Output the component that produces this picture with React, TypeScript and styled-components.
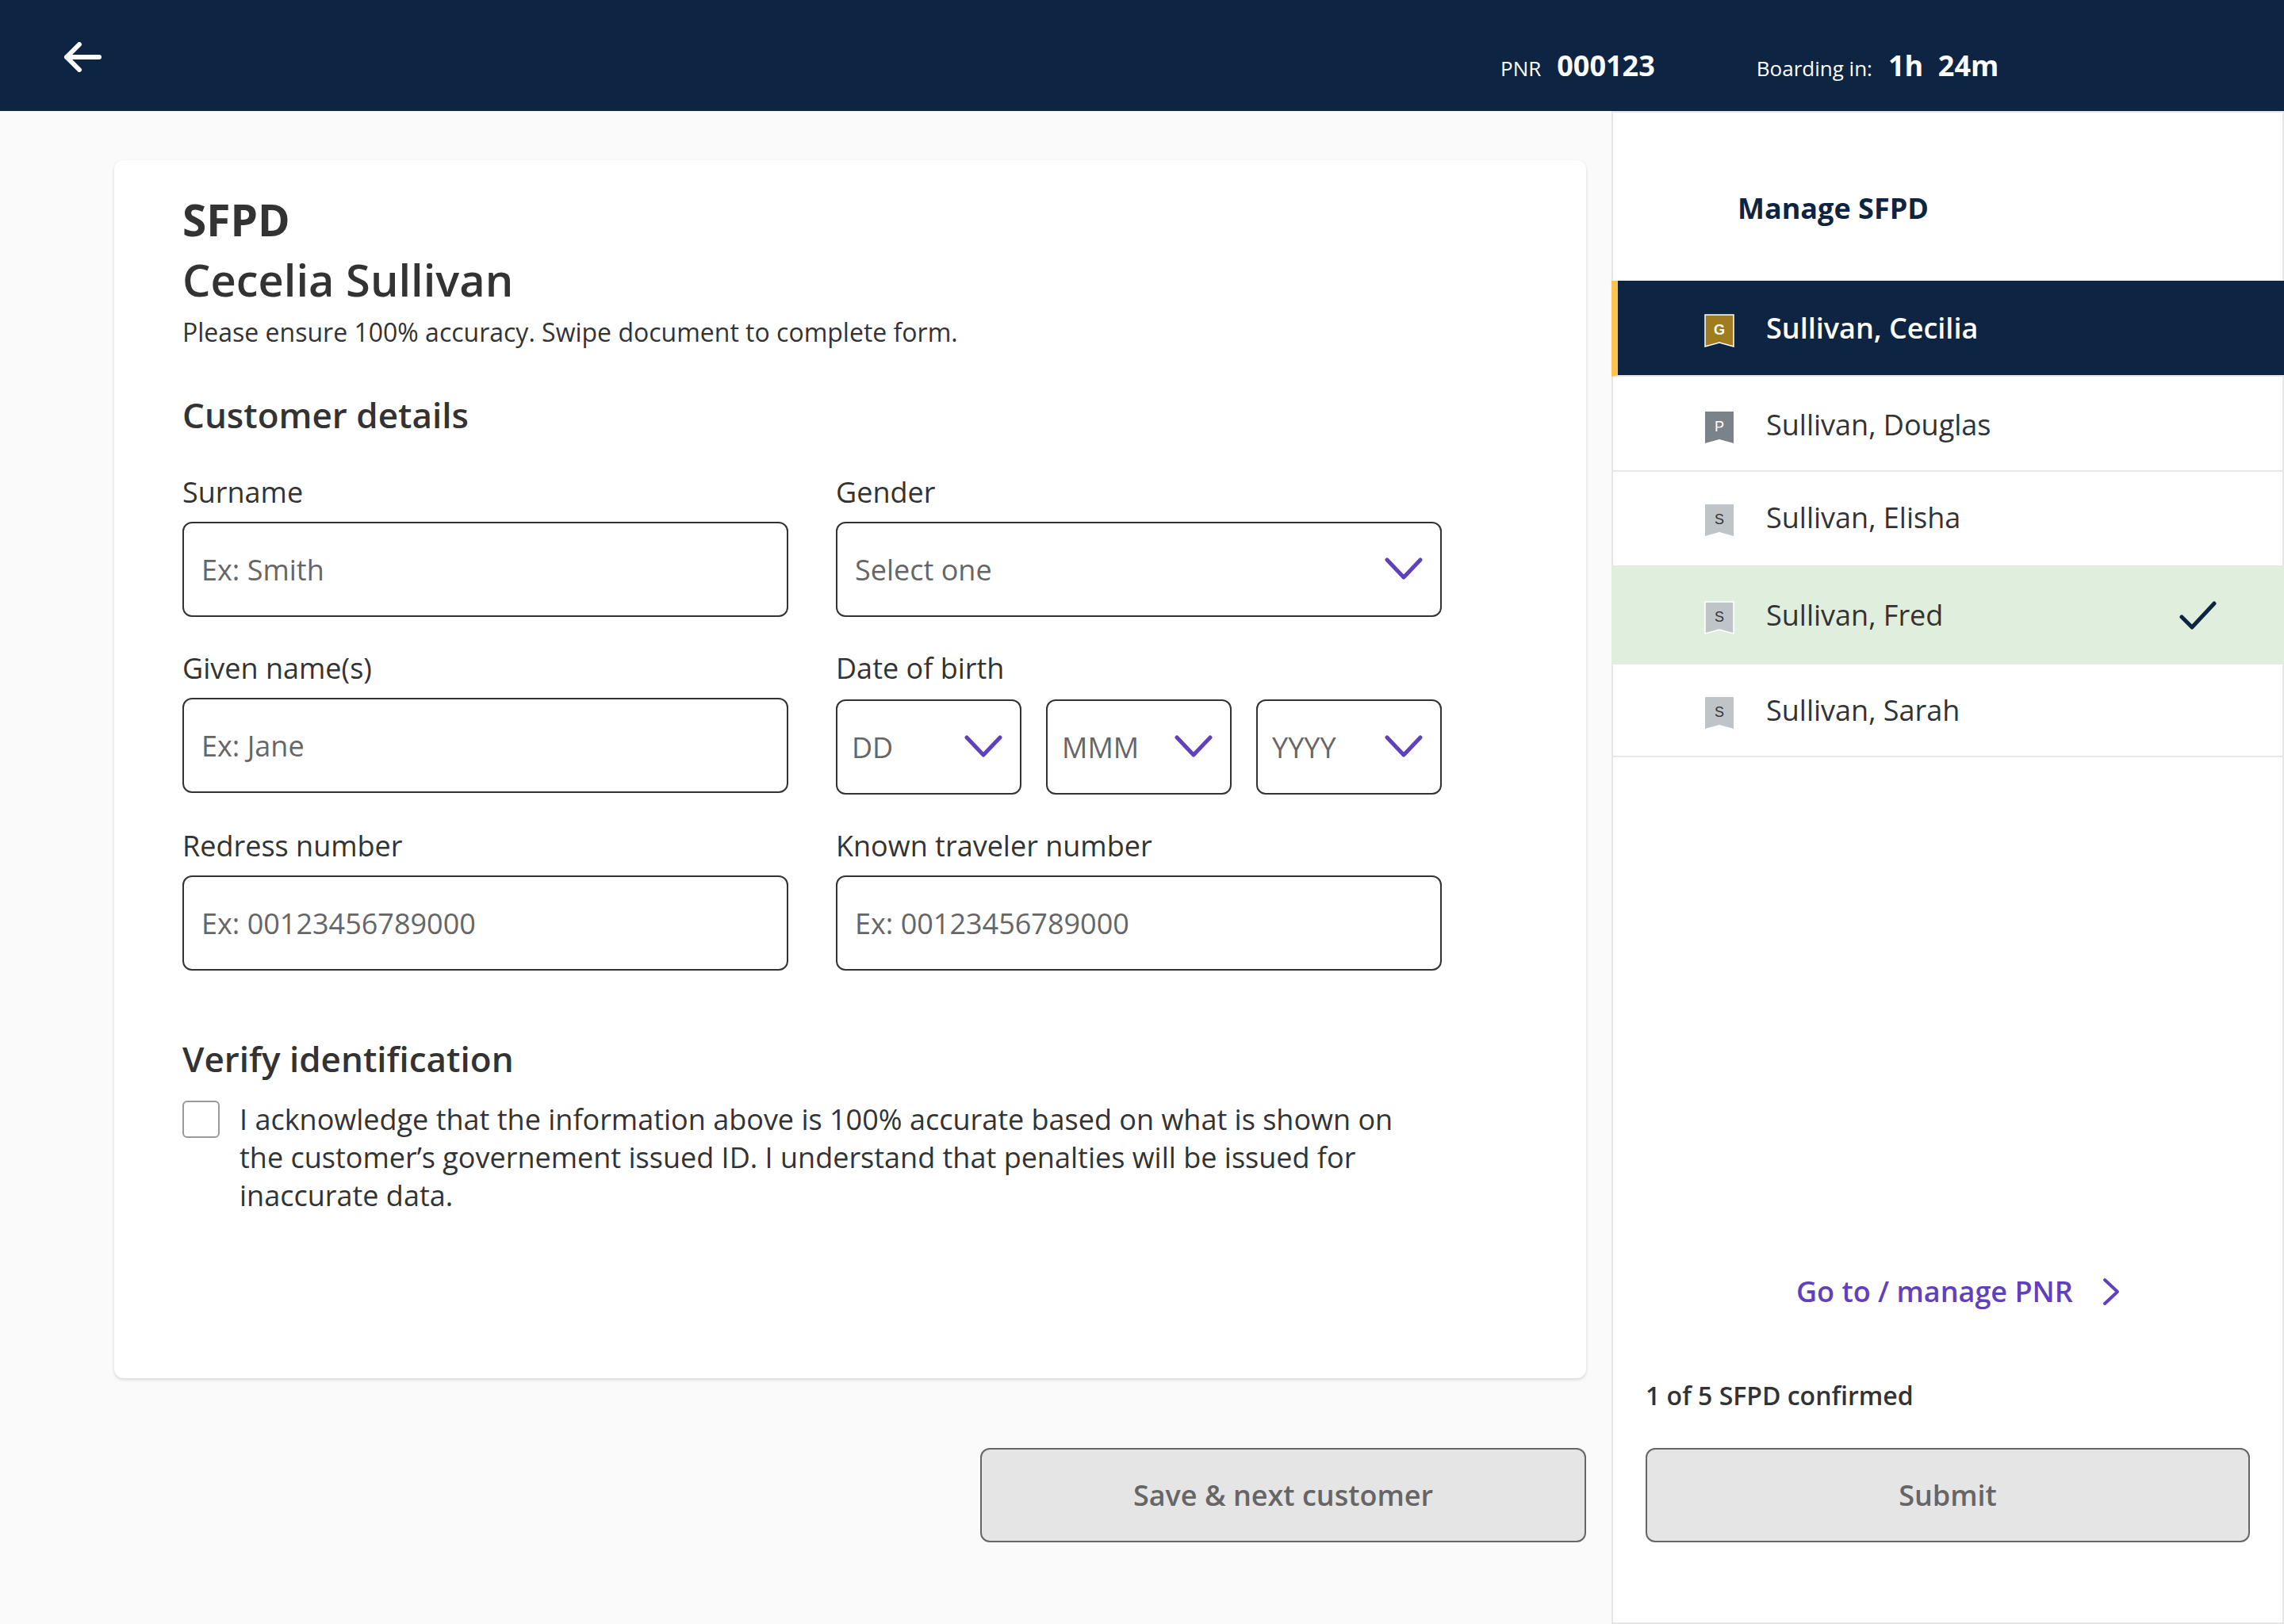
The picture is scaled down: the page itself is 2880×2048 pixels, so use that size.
import React from "react";
import styled, { createGlobalStyle } from "styled-components";

const GlobalStyle = createGlobalStyle`
  html, body { margin: 0; padding: 0; background: #fafafa; }
  body { font-family: "Open Sans", "Noto Sans", sans-serif; color: #333; overflow: hidden; }
  * { box-sizing: border-box; }
`;

const Page = styled.div`
  width: 2880px;
  height: 2048px;
  display: flex;
  flex-direction: column;
  background: #fafafa;
`;

const Header = styled.header`
  height: 140px;
  flex: none;
  display: flex;
  align-items: flex-start;
  padding-left: 80px;
  background: #0d2543;
  color: #fff;
`;

const BackIcon = styled.svg`
  width: 48px;
  height: 38px;
  margin-top: 53px;
  flex: none;
`;

const InfoGroup = styled.div`
  display: flex;
  align-items: baseline;
  margin-left: 1764px;
  margin-top: 59px;
`;

const InfoLabel = styled.span`
  font-size: 26px;
  line-height: 48px;
  margin-right: 20px;
`;

const InfoValue = styled.span`
  font-size: 36px;
  line-height: 48px;
  font-weight: 700;
  white-space: pre;
  margin-right: 128px;
`;

const Main = styled.main`
  flex: 1;
  display: flex;
  min-height: 0;
`;

const LeftPane = styled.div`
  width: 2032px;
  flex: none;
  padding: 62px 32px 0 144px;
`;

const Card = styled.section`
  height: 1536px;
  padding: 36px 0 0 86px;
  background: #fff;
  border-radius: 12px;
  box-shadow: 0 2px 4px rgba(0, 0, 0, 0.14);
`;

const Eyebrow = styled.h1`
  margin: 0 0 0 0;
  padding-top: 1px;
  font-size: 55px;
  line-height: 75px;
  font-weight: 700;
  color: #333;
`;

const PassengerName = styled.h2`
  margin: 0;
  font-size: 56px;
  line-height: 76px;
  font-weight: 600;
  color: #333;
`;

const Subtitle = styled.p`
  margin: 5px 0 0;
  font-size: 32px;
  line-height: 48px;
`;

const SectionHeading = styled.h2<{ $top: number }>`
  margin: ${(p) => p.$top}px 0 0;
  font-size: 44px;
  line-height: 60px;
  font-weight: 600;
`;

const FieldGrid = styled.div`
  display: grid;
  width: 1588px;
  margin-top: 44px;
  grid-template-columns: 764px 764px;
  grid-template-rows: 181px 183px 181px;
  column-gap: 60px;
  row-gap: 41px;
`;

const Field = styled.div`
  display: flex;
  flex-direction: column;
`;

const Label = styled.label`
  font-size: 36px;
  line-height: 48px;
  margin-bottom: 13px;
`;

const TextInput = styled.input`
  width: 100%;
  height: 120px;
  padding: 0 22px;
  font: 400 36px "Open Sans", sans-serif;
  color: #333;
  background: #fff;
  border: 2px solid #333;
  border-radius: 12px;
  &::placeholder { color: #666; opacity: 1; }
`;

const SelectBox = styled.div<{ $compact?: boolean }>`
  flex: 1;
  height: 120px;
  display: flex;
  align-items: center;
  justify-content: space-between;
  padding: 0 21px 0 ${(p) => (p.$compact ? 18 : 22)}px;
  background: #fff;
  border: 2px solid #333;
  border-radius: 12px;
  font-size: 36px;
  color: #666;
`;

const SelectRow = styled.div`
  display: flex;
  gap: 31px;
  margin-top: 2px;
`;

const Chevron = styled.svg`
  width: 50px;
  height: 28px;
  flex: none;
  margin-top: -2px;
`;

const CheckRow = styled.div`
  display: flex;
  gap: 25px;
  margin-top: 23px;
`;

const CheckBox = styled.div`
  width: 47px;
  height: 47px;
  flex: none;
  border: 2px solid #999;
  border-radius: 6px;
  background: #fff;
`;

const CheckText = styled.p`
  margin: 0;
  width: 1470px;
  font-size: 36px;
  line-height: 48px;
`;

const Actions = styled.div`
  display: flex;
  justify-content: flex-end;
  margin-top: 88px;
`;

const DisabledButton = styled.button<{ $wide?: boolean }>`
  height: 119px;
  width: ${(p) => (p.$wide ? 762 : 764)}px;
  background: #e5e5e5;
  border: 2px solid #666;
  border-radius: 12px;
  color: #666;
  font: 600 36px "Open Sans", sans-serif;
`;

const Sidebar = styled.aside`
  flex: 1;
  display: flex;
  flex-direction: column;
  background: #fff;
  box-shadow: inset 0 0 0 2px #e6e6e6;
`;

const SidebarTitle = styled.h2`
  margin: 0;
  height: 214px;
  padding: 99px 0 0 159px;
  font-size: 36px;
  line-height: 48px;
  font-weight: 700;
  color: #0d2543;
`;

const PassengerList = styled.ul`
  margin: 0;
  padding: 0;
  list-style: none;
`;

type Tone = "active" | "done" | "plain";

const Row = styled.li<{ $tone: Tone; $divider?: boolean; $height: number; $nudge?: number }>`
  height: ${(p) => p.$height}px;
  display: flex;
  align-items: center;
  padding-left: ${(p) => (p.$tone === "active" ? 108 : 116)}px;
  padding-right: 84px;
  padding-top: ${(p) => Math.max(p.$nudge ?? 0, 0)}px;
  padding-bottom: ${(p) => Math.max(-(p.$nudge ?? 0), 0)}px;
  font-size: 36px;
  color: ${(p) => (p.$tone === "active" ? "#fff" : "#333")};
  font-weight: ${(p) => (p.$tone === "active" ? 600 : 400)};
  background: ${(p) =>
    p.$tone === "active" ? "#0d2543" : p.$tone === "done" ? "#e0eedd" : "transparent"};
  border-left: ${(p) => (p.$tone === "active" ? "8px solid #fdc250" : "none")};
  border-bottom: ${(p) => (p.$divider ? "2px solid #e6e6e6" : "none")};
`;

const Badge = styled.svg`
  width: 40px;
  height: 44px;
  flex: none;
  margin: 6px 39px 0 0;
  font-family: "Liberation Sans", Arial, sans-serif;
`;

const RowName = styled.span`
  flex: 1;
`;

const CheckMark = styled.svg`
  width: 48px;
  height: 40px;
  flex: none;
`;

const SidebarFooter = styled.div`
  flex: 1;
  display: flex;
  flex-direction: column;
  justify-content: flex-end;
  padding: 0 41px 103px 43px;
`;

const ManageLink = styled.a`
  display: flex;
  align-items: center;
  align-self: flex-start;
  margin-left: 190px;
  font-size: 36px;
  line-height: 48px;
  font-weight: 600;
  color: #5f41bd;
`;

const LinkChevron = styled.svg`
  width: 24px;
  height: 36px;
  margin-left: 36px;
`;

const Confirmed = styled.p`
  margin: 83px 0 42px;
  font-size: 32px;
  line-height: 48px;
  font-weight: 600;
  color: #333;
`;

const ChevronDown = () => (
  <Chevron viewBox="0 0 50 28" fill="none">
    <path d="M4 3 L25 25 L46 3" stroke="#5f41bd" strokeWidth="5" strokeLinecap="round" strokeLinejoin="round" />
  </Chevron>
);

const palette = {
  G: { fill: "#a07c20", ink: "#fff" },
  P: { fill: "#7b8289", ink: "#fff" },
  S: { fill: "#bfc4c8", ink: "#333" },
} as const;

const Bookmark = ({ letter, outlined }: { letter: keyof typeof palette; outlined?: boolean }) => (
  <Badge viewBox="0 0 40 44">
    <path
      d="M2 2 H38 V42 L20 37 L2 42 Z"
      fill={palette[letter].fill}
      stroke={outlined ? "#fff" : "none"}
      strokeWidth="1.5"
    />
    <text x="20" y="27" textAnchor="middle" fontSize="18" fill={palette[letter].ink}>
      {letter}
    </text>
  </Badge>
);

const passengers: {
  name: string;
  letter: keyof typeof palette;
  tone: Tone;
  divider?: boolean;
  height: number;
  nudge?: number;
}[] = [
  { name: "Sullivan, Cecilia", letter: "G", tone: "active", height: 121, divider: true },
  { name: "Sullivan, Douglas", letter: "P", tone: "plain", height: 120, divider: true, nudge: 3 },
  { name: "Sullivan, Elisha", letter: "S", tone: "plain", height: 118, nudge: -3 },
  { name: "Sullivan, Fred", letter: "S", tone: "done", height: 125 },
  { name: "Sullivan, Sarah", letter: "S", tone: "plain", height: 117, divider: true },
];

export default function App() {
  return (
    <Page>
      <GlobalStyle />
      <Header>
        <BackIcon viewBox="0 0 48 38" fill="none">
          <path d="M45 19 H4 M20 3 L4 19 L20 35" stroke="#fff" strokeWidth="6" strokeLinecap="round" strokeLinejoin="round" />
        </BackIcon>
        <InfoGroup>
          <InfoLabel>PNR</InfoLabel>
          <InfoValue>000123</InfoValue>
          <InfoLabel>Boarding in:</InfoLabel>
          <InfoValue>1h  24m</InfoValue>
        </InfoGroup>
      </Header>
      <Main>
        <LeftPane>
          <Card>
            <Eyebrow>SFPD</Eyebrow>
            <PassengerName>Cecelia Sullivan</PassengerName>
            <Subtitle>Please ensure 100% accuracy. Swipe document to complete form.</Subtitle>
            <SectionHeading $top={50}>Customer details</SectionHeading>
            <FieldGrid>
              <Field>
                <Label>Surname</Label>
                <TextInput placeholder="Ex: Smith" />
              </Field>
              <Field>
                <Label>Gender</Label>
                <SelectBox>
                  Select one
                  <ChevronDown />
                </SelectBox>
              </Field>
              <Field>
                <Label>Given name(s)</Label>
                <TextInput placeholder="Ex: Jane" />
              </Field>
              <Field>
                <Label>Date of birth</Label>
                <SelectRow>
                  <SelectBox $compact>
                    DD
                    <ChevronDown />
                  </SelectBox>
                  <SelectBox $compact>
                    MMM
                    <ChevronDown />
                  </SelectBox>
                  <SelectBox $compact>
                    YYYY
                    <ChevronDown />
                  </SelectBox>
                </SelectRow>
              </Field>
              <Field>
                <Label>Redress number</Label>
                <TextInput placeholder="Ex: 00123456789000" />
              </Field>
              <Field>
                <Label>Known traveler number</Label>
                <TextInput placeholder="Ex: 00123456789000" />
              </Field>
            </FieldGrid>
            <SectionHeading $top={81}>Verify identification</SectionHeading>
            <CheckRow>
              <CheckBox />
              <CheckText>
                I acknowledge that the information above is 100% accurate based on what is shown on the
                customer’s governement issued ID. I understand that penalties will be issued for
                inaccurate data.
              </CheckText>
            </CheckRow>
          </Card>
          <Actions>
            <DisabledButton>Save &amp; next customer</DisabledButton>
          </Actions>
        </LeftPane>
        <Sidebar>
          <SidebarTitle>Manage SFPD</SidebarTitle>
          <PassengerList>
            {passengers.map((p) => (
              <Row key={p.name} $tone={p.tone} $divider={p.divider} $height={p.height} $nudge={p.nudge}>
                <Bookmark letter={p.letter} outlined={p.tone !== "plain"} />
                <RowName>{p.name}</RowName>
                {p.tone === "done" && (
                  <CheckMark viewBox="0 0 48 40" fill="none">
                    <path d="M3 22 L16 35 L44 5" stroke="#0d2543" strokeWidth="5" strokeLinecap="round" strokeLinejoin="round" />
                  </CheckMark>
                )}
              </Row>
            ))}
          </PassengerList>
          <SidebarFooter>
            <ManageLink>
              Go to / manage PNR
              <LinkChevron viewBox="0 0 24 36" fill="none">
                <path d="M4 3 L20 18 L4 33" stroke="#5f41bd" strokeWidth="4" strokeLinecap="round" strokeLinejoin="round" />
              </LinkChevron>
            </ManageLink>
            <Confirmed>1 of 5 SFPD confirmed</Confirmed>
            <DisabledButton $wide>Submit</DisabledButton>
          </SidebarFooter>
        </Sidebar>
      </Main>
    </Page>
  );
}
